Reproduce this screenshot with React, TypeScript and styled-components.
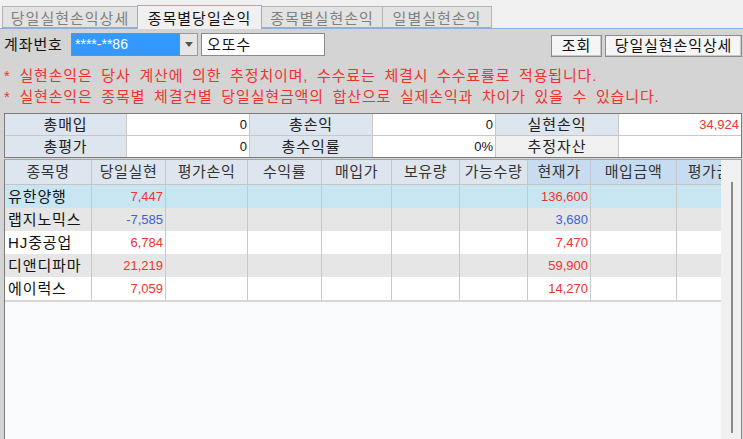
import React from 'react';
import styled, { createGlobalStyle } from 'styled-components';

const GlobalStyle = createGlobalStyle`
  html, body {
    margin: 0;
    padding: 0;
    background: #f0f0f0;
    font-family: "Liberation Sans", "Noto Sans CJK KR", sans-serif;
    overflow: hidden;
  }
`;

const FONT = `"Liberation Sans", "Noto Sans CJK KR", sans-serif`;

interface Row {
  name: string;
  today: string;
  price: string;
  down?: boolean;
}

const rows: Row[] = [
  { name: '유한양행', today: '7,447', price: '136,600' },
  { name: '랩지노믹스', today: '-7,585', price: '3,680', down: true },
  { name: 'HJ중공업', today: '6,784', price: '7,470' },
  { name: '디앤디파마', today: '21,219', price: '59,900' },
  { name: '에이럭스', today: '7,059', price: '14,270' },
];

const columns = [
  { title: '종목명', width: 87 },
  { title: '당일실현', width: 74 },
  { title: '평가손익', width: 82 },
  { title: '수익률', width: 74 },
  { title: '매입가', width: 70 },
  { title: '보유량', width: 68 },
  { title: '가능수량', width: 68 },
  { title: '현재가', width: 63, hot: true },
  { title: '매입금액', width: 86, hot: true },
  { title: '평가금액', width: 80, hot: true },
];

const Window = styled.div`
  width: 743px;
  height: 439px;
  display: flex;
  flex-direction: column;
  background: #f0f0f0;
  font-family: ${FONT};
`;

const TabBar = styled.div`
  display: flex;
  align-items: flex-end;
  height: 29px;
  padding-left: 3px;
  border-bottom: 1px solid #8fb1d9;
  box-sizing: border-box;
`;

const Tab = styled.div<{ $active?: boolean; $w: number }>`
  width: ${(p) => p.$w}px;
  height: ${(p) => (p.$active ? 24 : 22)}px;
  box-sizing: border-box;
  margin-left: -1px;
  margin-bottom: ${(p) => (p.$active ? -1 : 0)}px;
  display: flex;
  align-items: center;
  justify-content: center;
  font-size: 15px;
  letter-spacing: 1px;
  color: ${(p) => (p.$active ? '#111' : '#808080')};
  background: ${(p) => (p.$active ? '#f0f0f0' : '#e3e3e3')};
  border: 1px solid ${(p) => (p.$active ? '#8fb1d9' : '#b4b4b4')};
  border-bottom: ${(p) => (p.$active ? 'none' : '1px solid #8fb1d9')};
  position: relative;
  z-index: ${(p) => (p.$active ? 1 : 0)};
`;

const Panel = styled.div`
  flex: 1;
  background: #d4d4d4;
  display: flex;
  flex-direction: column;
  padding: 0 1px 0 4px;
  min-height: 0;
`;

const Toolbar = styled.div`
  display: flex;
  align-items: flex-start;
  padding-top: 4px;
  height: 30px;
  box-sizing: border-box;
`;

const FieldLabel = styled.span`
  font-size: 15px;
  letter-spacing: 0.9px;
  line-height: 23px;
  color: #111;
  width: 67px;
`;

const AccountField = styled.div`
  width: 109px;
  height: 23px;
  box-sizing: border-box;
  background: #3399ff;
  border: 1px solid #8a8a8a;
  color: #fff;
  font-size: 14px;
  line-height: 21px;
  padding-left: 3px;
`;

const ComboButton = styled.div`
  width: 18px;
  height: 23px;
  box-sizing: border-box;
  background: #e6e6e6;
  border: 1px solid #9a9a9a;
  border-left: none;
  display: flex;
  align-items: center;
  justify-content: center;
`;

const NameField = styled.div`
  width: 124px;
  height: 23px;
  margin-left: 3px;
  box-sizing: border-box;
  background: #fff;
  border: 1px solid #8a8a8a;
  font-size: 15px;
  letter-spacing: 0.9px;
  line-height: 21px;
  padding-left: 5px;
  color: #111;
`;

const Spacer = styled.div`
  flex: 1;
`;

const Button = styled.button<{ $w: number }>`
  width: ${(p) => p.$w}px;
  height: 22px;
  margin-top: 2px;
  margin-left: 3px;
  padding: 0;
  box-sizing: border-box;
  background: #f5f5f5;
  border: 1px solid #8c8c8c;
  box-shadow: inset -1px -1px 0 #c8c8c8;
  font-family: ${FONT};
  font-size: 15px;
  letter-spacing: 0.9px;
  line-height: 20px;
  color: #111;
`;

const Notice = styled.div`
  padding-top: 6px;
  display: flex;
  flex-direction: column;
`;

const NoticeLine = styled.div`
  font-size: 15px;
  letter-spacing: 0.85px;
  word-spacing: 3.7px;
  line-height: 21px;
  color: #f0332e;
  white-space: nowrap;
`;

const Summary = styled.div`
  margin-top: 6px;
  display: grid;
  grid-template-columns: 121px 122px 122px 122px 122px 1fr;
  border: 1px solid #7c7c7c;
  background: #c8c8c8;
  gap: 1px;
`;

const SumLabel = styled.div<{ $plain?: boolean }>`
  height: 21px;
  line-height: 21px;
  text-align: center;
  font-size: 15px;
  letter-spacing: 0.9px;
  color: #222;
  background: ${(p) => (p.$plain ? '#f0f0f0' : '#dde5ee')};
`;

const SumValue = styled.div<{ $red?: boolean }>`
  height: 21px;
  line-height: 21px;
  text-align: right;
  padding-right: 2px;
  font-size: 13px;
  color: ${(p) => (p.$red ? '#f0332e' : '#111')};
  background: #fff;
`;

const GridBox = styled.div`
  margin-top: 1px;
  flex: 1;
  display: flex;
  border-left: 1px solid #7c7c7c;
  border-right: 1px solid #8a8a8a;
  border-top: 1px solid #a8a8a8;
  min-height: 0;
`;

const GridView = styled.div`
  flex: 1;
  overflow: hidden;
  background: #fafbfd;
`;

const HeaderRow = styled.div`
  display: flex;
  height: 24px;
  border-bottom: 1px solid #c4c4c4;
`;

const HeaderCell = styled.div<{ $w: number; $hot?: boolean }>`
  flex: 0 0 ${(p) => p.$w}px;
  box-sizing: border-box;
  border-right: 1px solid #c2c8d0;
  background: ${(p) => (p.$hot ? '#c7dcf0' : '#dde5ee')};
  text-align: center;
  line-height: 24px;
  font-size: 15px;
  letter-spacing: 0.6px;
  color: #333;
  white-space: nowrap;
  overflow: hidden;
`;

const DataRow = styled.div<{ $bg: string; $last?: boolean }>`
  display: flex;
  height: 23px;
  background: ${(p) => p.$bg};
  border-bottom: ${(p) => (p.$last ? '2px solid #d6d6d6' : 'none')};
`;

const Cell = styled.div<{ $w: number; $color?: string; $left?: boolean }>`
  flex: 0 0 ${(p) => p.$w}px;
  box-sizing: border-box;
  border-right: 1px solid #c8c8c8;
  text-align: ${(p) => (p.$left ? 'left' : 'right')};
  padding: ${(p) => (p.$left ? '0 0 0 3px' : '0 2px 0 0')};
  line-height: 23px;
  font-size: ${(p) => (p.$left ? 15 : 13)}px;
  letter-spacing: ${(p) => (p.$left ? 0.9 : 0)}px;
  color: ${(p) => p.$color || '#111'};
  white-space: nowrap;
  overflow: hidden;
`;

const ScrollTrack = styled.div`
  width: 20px;
  background: #f0f0f0;
  display: flex;
  justify-content: center;
  padding-top: 22px;
  padding-bottom: 6px;
  box-sizing: border-box;
`;

const ScrollThumb = styled.div`
  width: 2px;
  margin-left: 1px;
  background: #8a8a8a;
`;

const RED = '#f0332e';
const BLUE = '#3a62d8';

const rowBg = (i: number) => (i === 0 ? '#c8e6f1' : i % 2 === 1 ? '#e6e6e6' : '#ffffff');

export default function App() {
  return (
    <>
      <GlobalStyle />
      <Window>
        <TabBar>
          <Tab $w={136}>당일실현손익상세</Tab>
          <Tab $w={125} $active>
            종목별당일손익
          </Tab>
          <Tab $w={122}>종목별실현손익</Tab>
          <Tab $w={110}>일별실현손익</Tab>
        </TabBar>
        <Panel>
          <Toolbar>
            <FieldLabel>계좌번호</FieldLabel>
            <AccountField>****-**86</AccountField>
            <ComboButton>
              <svg width="8" height="5" viewBox="0 0 8 5">
                <path d="M0 0h8L4 5z" fill="#555" />
              </svg>
            </ComboButton>
            <NameField>오또수</NameField>
            <Spacer />
            <Button $w={51}>조회</Button>
            <Button $w={137}>당일실현손익상세</Button>
          </Toolbar>
          <Notice>
            <NoticeLine>* 실현손익은 당사 계산에 의한 추정치이며, 수수료는 체결시 수수료률로 적용됩니다.</NoticeLine>
            <NoticeLine>* 실현손익은 종목별 체결건별 당일실현금액의 합산으로 실제손익과 차이가 있을 수 있습니다.</NoticeLine>
          </Notice>
          <Summary>
            <SumLabel>총매입</SumLabel>
            <SumValue>0</SumValue>
            <SumLabel>총손익</SumLabel>
            <SumValue>0</SumValue>
            <SumLabel>실현손익</SumLabel>
            <SumValue $red>34,924</SumValue>
            <SumLabel>총평가</SumLabel>
            <SumValue>0</SumValue>
            <SumLabel>총수익률</SumLabel>
            <SumValue>0%</SumValue>
            <SumLabel $plain>추정자산</SumLabel>
            <SumValue />
          </Summary>
          <GridBox>
            <GridView>
              <HeaderRow>
                {columns.map((c) => (
                  <HeaderCell key={c.title} $w={c.width} $hot={c.hot}>
                    {c.title}
                  </HeaderCell>
                ))}
              </HeaderRow>
              {rows.map((r, i) => {
                const color = r.down ? BLUE : RED;
                return (
                  <DataRow key={r.name} $bg={rowBg(i)} $last={i === rows.length - 1}>
                    {columns.map((c, ci) => {
                      if (ci === 0)
                        return (
                          <Cell key={ci} $w={c.width} $left>
                            {r.name}
                          </Cell>
                        );
                      if (ci === 1)
                        return (
                          <Cell key={ci} $w={c.width} $color={color}>
                            {r.today}
                          </Cell>
                        );
                      if (ci === 7)
                        return (
                          <Cell key={ci} $w={c.width} $color={color}>
                            {r.price}
                          </Cell>
                        );
                      return <Cell key={ci} $w={c.width} />;
                    })}
                  </DataRow>
                );
              })}
            </GridView>
            <ScrollTrack>
              <ScrollThumb />
            </ScrollTrack>
          </GridBox>
        </Panel>
      </Window>
    </>
  );
}
